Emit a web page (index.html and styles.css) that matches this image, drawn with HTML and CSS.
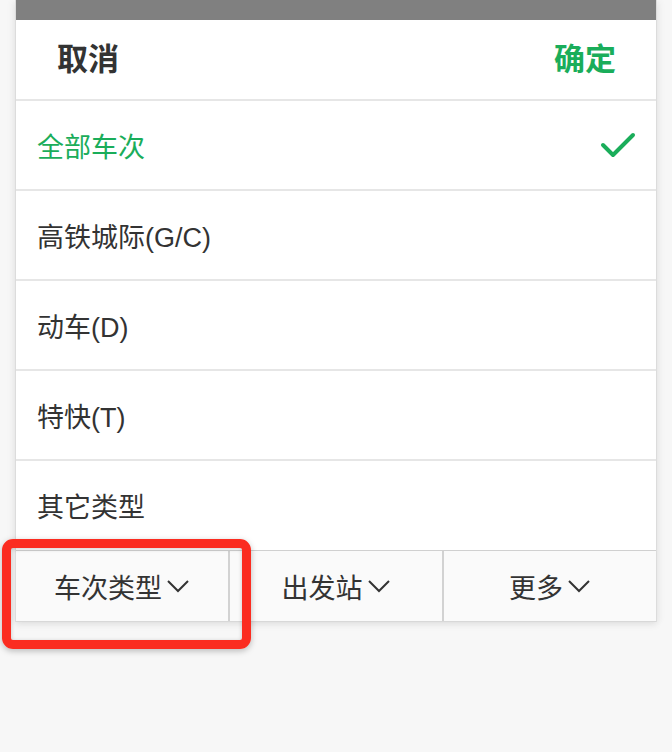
FILE: index.html
```html
<!DOCTYPE html>
<html lang="zh">
<head>
<meta charset="utf-8">
<link rel="stylesheet" href="styles.css">
</head>
<body>
<div class="page">
  <div class="panel">
    <div class="topbar"></div>
    <div class="header">
      <span class="cancel">取消</span>
      <span class="ok">确定</span>
    </div>
    <ul class="list">
      <li class="item active">全部车次
        <svg class="check" width="36" height="28" viewBox="0 0 36 28"><path d="M3 14 L13 24 L33 4" fill="none" stroke="#1aad5a" stroke-width="4" stroke-linecap="round" stroke-linejoin="round"/></svg>
      </li>
      <li class="item">高铁城际(G/C)</li>
      <li class="item">动车(D)</li>
      <li class="item">特快(T)</li>
      <li class="item">其它类型</li>
    </ul>
    <div class="tabs">
      <div class="tab">车次类型<svg class="chev" width="24" height="15" viewBox="0 0 24 15"><path d="M2 2 L12 12 L22 2" fill="none" stroke="#333" stroke-width="2"/></svg></div>
      <div class="tab">出发站<svg class="chev" width="24" height="15" viewBox="0 0 24 15"><path d="M2 2 L12 12 L22 2" fill="none" stroke="#333" stroke-width="2"/></svg></div>
      <div class="tab">更多<svg class="chev" width="24" height="15" viewBox="0 0 24 15"><path d="M2 2 L12 12 L22 2" fill="none" stroke="#333" stroke-width="2"/></svg></div>
    </div>
  </div>
  <div class="highlight"></div>
</div>
</body>
</html>
```
FILE: styles.css
```css
* { box-sizing: border-box; }
html, body { margin: 0; padding: 0; }
body {
  width: 672px;
  height: 752px;
  background: #f7f7f7;
  font-family: "Liberation Sans", "Noto Sans CJK SC", sans-serif;
  color: #333;
  overflow: hidden;
}
.page {
  position: relative;
  height: 752px;
  padding: 0 15px;
}
.panel {
  width: 642px;
  border-left: 1px solid #dcdcdc;
  border-right: 1px solid #dcdcdc;
  background: #fff;
  box-shadow: 0 4px 6px rgba(0,0,0,0.06), -4px 0 6px rgba(0,0,0,0.03), 4px 0 6px rgba(0,0,0,0.03);
}
.topbar {
  height: 20px;
  background: #808080;
}
.header {
  height: 81px;
  display: flex;
  align-items: center;
  justify-content: space-between;
  padding: 0 40px 6px 41px;
  border-bottom: 2px solid #e6e6e6;
  font-size: 31px;
  font-weight: bold;
}
.cancel { color: #333; }
.ok { color: #1aad5a; }
.list { list-style: none; margin: 0; padding: 0; }
.item {
  height: 90px;
  display: flex;
  align-items: center;
  justify-content: space-between;
  padding: 0 20px 0 21px;
  font-size: 27px;
  color: #333;
  border-bottom: 2px solid #e6e6e6;
}
.item:last-child { border-bottom: 1px solid #d0d0d0; }
.item.active { color: #1aad5a; }
.check { display: block; }
.tabs {
  display: flex;
  height: 71px;
  background: #fafafa;
  border-bottom: 1px solid #d8d8d8;
}
.tab {
  flex: 1;
  display: flex;
  align-items: center;
  justify-content: center;
  gap: 4px;
  font-size: 27px;
  color: #333;
  border-right: 2px solid #d2d2d2;
}
.tab:last-child { border-right: none; }
.chev { display: block; margin-top: 1px; }
.highlight {
  position: absolute;
  left: 2px;
  top: 539px;
  width: 249px;
  height: 110px;
  border: 9px solid #fb2c20;
  border-radius: 11px;
  box-shadow: 0 2px 6px rgba(0,0,0,0.25), inset 0 1px 4px rgba(0,0,0,0.2);
}
```
